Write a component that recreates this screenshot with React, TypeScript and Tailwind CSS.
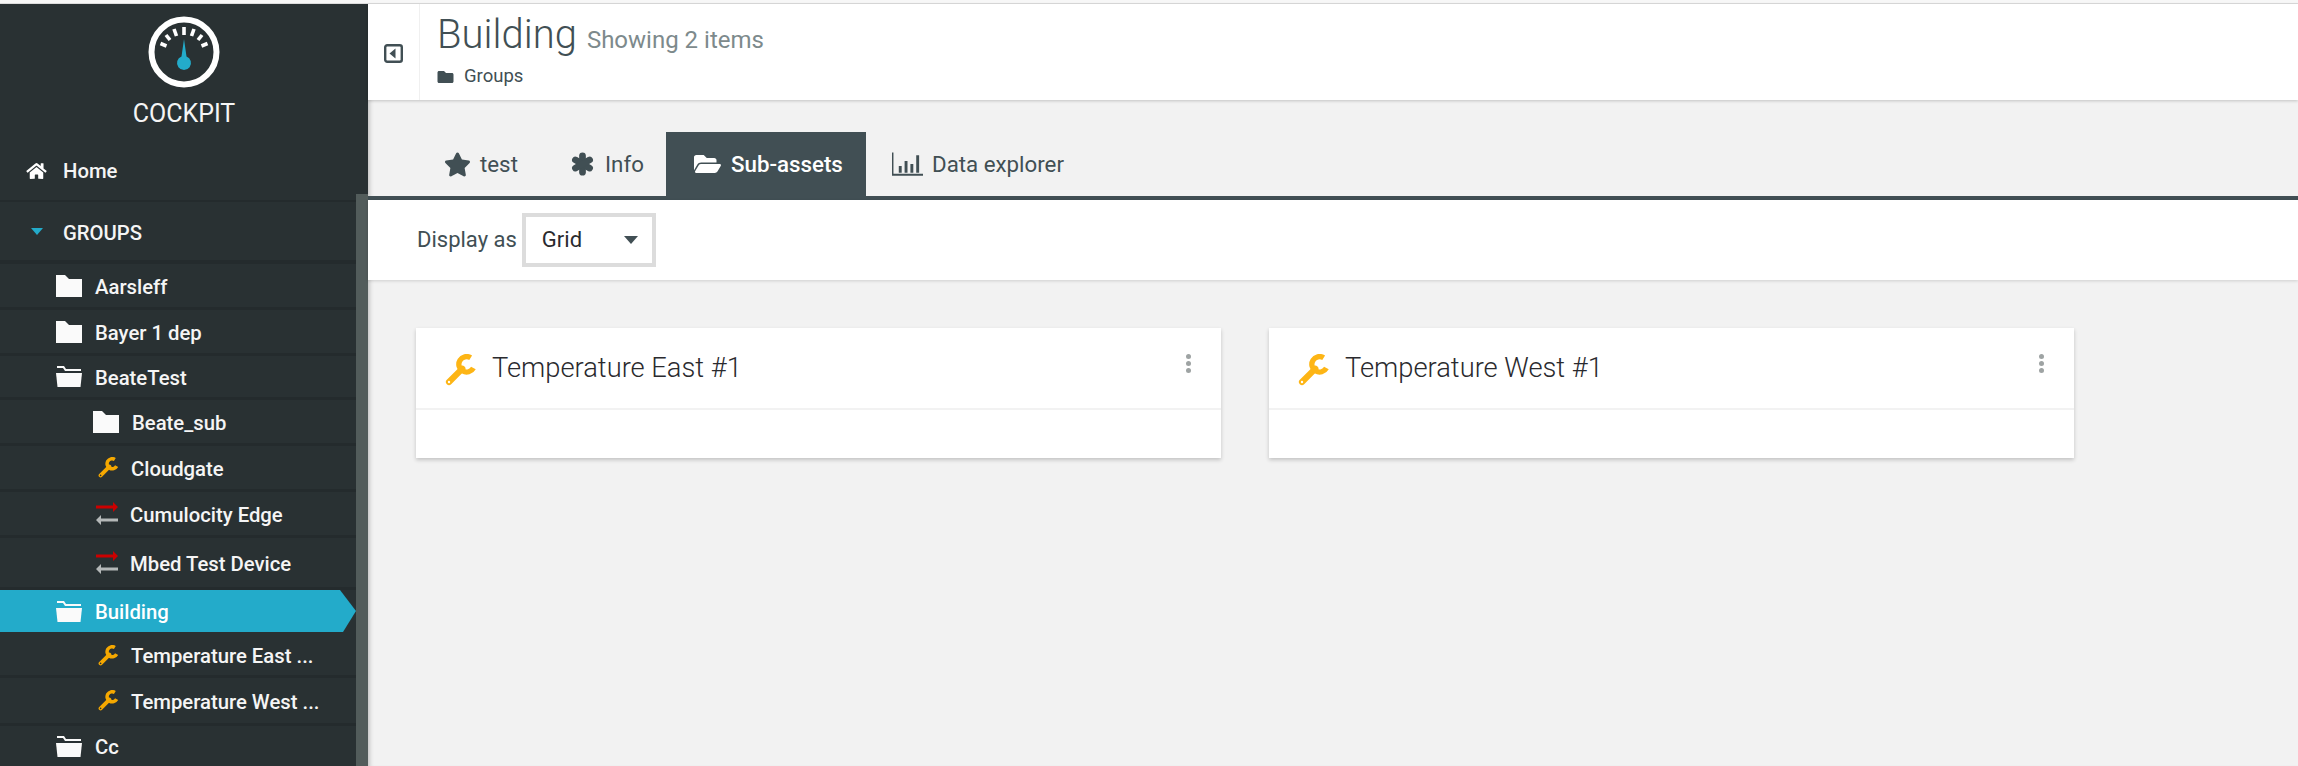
import type { ReactNode } from "react";
import { FaFolder, FaFolderOpen, FaHome, FaStar } from "react-icons/fa";

type RowIcon = "folder" | "open" | "wrench" | "swap";

interface NavRow {
  label: string;
  icon: RowIcon;
  height: string;
  indent: string;
  gap: string;
  active?: boolean;
}

const ROWS: NavRow[] = [
  { label: "Aarsleff", icon: "folder", height: "h-[46px]", indent: "pl-[56px]", gap: "gap-[13px]" },
  { label: "Bayer 1 dep", icon: "folder", height: "h-[46px]", indent: "pl-[56px]", gap: "gap-[13px]" },
  { label: "BeateTest", icon: "open", height: "h-[44px]", indent: "pl-[56px]", gap: "gap-[13px]" },
  { label: "Beate_sub", icon: "folder", height: "h-[46px]", indent: "pl-[93px]", gap: "gap-[13px]" },
  { label: "Cloudgate", icon: "wrench", height: "h-[46px]", indent: "pl-[98px]", gap: "gap-[12px]" },
  { label: "Cumulocity Edge", icon: "swap", height: "h-[46px]", indent: "pl-[96px]", gap: "gap-[12px]" },
  { label: "Mbed Test Device", icon: "swap", height: "h-[52px]", indent: "pl-[96px]", gap: "gap-[12px]" },
  { label: "Building", icon: "open", height: "h-[42px]", indent: "pl-[56px]", gap: "gap-[13px]", active: true },
  { label: "Temperature East ...", icon: "wrench", height: "h-[46px] pt-[3px]", indent: "pl-[98px]", gap: "gap-[12px]" },
  { label: "Temperature West ...", icon: "wrench", height: "h-[48px]", indent: "pl-[98px]", gap: "gap-[12px]" },
  { label: "Cc", icon: "open", height: "h-[40px]", indent: "pl-[56px]", gap: "gap-[13px]" },
];

function WrenchIcon({ className, hole }: { className: string; hole: string }) {
  return (
    <svg viewBox="0 0 24 24" className={`shrink-0 ${className}`} fill="none" stroke="currentColor">
      <path d="M3 21L13 11" strokeWidth="4.600" strokeLinecap="round" />
      <path d="M19.250 2.800A5.800 5.800 0 1 0 21.300 10.500" strokeWidth="4" />
      <circle cx="3" cy="21" r="0.900" fill={hole} stroke="none" />
    </svg>
  );
}

function ClosedFolder() {
  return (
    <svg viewBox="0 0 26 22" className="h-[22px] w-[26px] shrink-0" fill="#fafafa">
      <path d="M0 0h9l4 4h13v18H0z" />
    </svg>
  );
}

function OpenFolder() {
  return (
    <svg viewBox="0 0 26 21" className="h-[21px] w-[26px] shrink-0" fill="#fafafa">
      <path d="M1 0h7l2 3h15v2H9L7 2H1z" />
      <path d="M0 7h26l-1.500 14H1.500z" />
    </svg>
  );
}

function SwapArrows() {
  return (
    <svg viewBox="0 0 22 23" className="h-[23px] w-[22px] shrink-0">
      <path d="M0 3.500h17V0l5 5-5 5V6.500H0z" fill="#cc0000" />
      <path d="M22 16.500H5V13l-5 5 5 5v-3.500h17z" fill="#b4b8b8" />
    </svg>
  );
}

function Icon({ icon }: { icon: RowIcon }) {
  if (icon === "folder") return <ClosedFolder />;
  if (icon === "open") return <OpenFolder />;
  if (icon === "wrench") return <WrenchIcon className="h-[21px] w-[21px] text-[#f5a800]" hole="#293133" />;
  return <SwapArrows />;
}

function Logo() {
  return (
    <svg viewBox="0 0 72 72" className="h-[72px] w-[72px]">
      <circle cx="36" cy="36" r="32.500" fill="none" stroke="#fff" strokeWidth="6" />
      <g stroke="#fff" strokeWidth="3.600">
        <path d="M36 11v8" />
        <path d="M26 13l2.500 7" />
        <path d="M46 13l-2.500 7" />
        <path d="M18 19l4 5" />
        <path d="M54 19l-4 5" />
        <path d="M12.500 27.500l6 2.500" />
        <path d="M59.500 27.500l-6 2.500" />
      </g>
      <path d="M36 23l2.500 17.500a7 7 0 1 1-5 0z" fill="#23abca" />
    </svg>
  );
}

function Sidebar() {
  return (
    <aside className="flex w-[368px] shrink-0 overflow-hidden bg-[#293133] font-['Roboto',sans-serif] text-[20.300px] font-medium text-[#f5f5f5]">
      <div className="w-[356px] shrink-0">
        <div className="flex h-[133px] w-[368px] flex-col items-center pt-[12px]">
          <Logo />
          <span className="mt-[11px] text-[25px] leading-[30px] font-normal">COCKPIT</span>
        </div>
        <div className="flex h-[65px] items-center gap-[15px] border-b-2 border-[#242b2d] pt-[5px] pl-[25px]">
          <FaHome className="h-[18px] w-[23px] text-white" />
          <span>Home</span>
        </div>
        <div className="flex h-[62px] items-center border-b-4 border-[#242b2d] pl-[31px]">
          <span className="h-0 w-0 border-x-[6px] border-t-[7px] border-x-transparent border-t-[#23abca]" />
          <span className="ml-[20px] pt-[5px]">GROUPS</span>
        </div>
        {ROWS.map((row) => (
          <div
            key={row.label}
            className={`flex items-center ${row.height} ${row.indent} ${row.gap} ${
              row.active
                ? "bg-[#23abca] text-white [clip-path:polygon(0_0,340px_0,356px_50%,343px_100%,0_100%)]"
                : row.label === "Cc"
                  ? ""
                  : "border-b-[3px] border-[#242b2d]"
            }`}
          >
            <Icon icon={row.icon} />
            <span className="whitespace-nowrap pt-[3px]">{row.label}</span>
          </div>
        ))}
      </div>
      <div className="flex w-[12px] flex-col pt-[190px]">
        <div className="flex-1 bg-[#525c5b]" />
      </div>
    </aside>
  );
}

function Tab({ icon, label, active, box }: { icon: ReactNode; label: string; active?: boolean; box: string }) {
  return (
    <div
      className={`flex h-full items-center gap-[9px] text-[22.300px] ${box} ${
        active ? "bg-[#414f54] font-medium text-white" : "text-[#414f54]"
      }`}
    >
      {icon}
      <span className="pt-[2px]">{label}</span>
    </div>
  );
}

function AsteriskIcon() {
  return (
    <svg viewBox="0 0 24 24" className="h-[24px] w-[23px]" fill="none" stroke="#414f54" strokeWidth="7" strokeLinecap="round">
      <path d="M12 3.500v17" />
      <path d="M4.600 7.750l14.800 8.500" />
      <path d="M19.400 7.750l-14.800 8.500" />
    </svg>
  );
}

function ChartIcon() {
  return (
    <svg viewBox="0 0 32 24" className="h-[24px] w-[31px]" fill="#414f54">
      <path d="M0 0h1.500v22H32v2H0z" />
      <path d="M7 14h3v7H7zM13 9h3v12h-3zM19 12h3v9h-3zM25 3h3v18h-3z" />
    </svg>
  );
}

function AssetCard({ name }: { name: string }) {
  return (
    <div className="flex h-[130px] w-[805px] flex-col bg-white shadow-[0_2px_4px_rgba(0,0,0,0.2)]">
      <div className="flex h-[82px] items-start justify-between border-b-2 border-[#f2f2f2] pr-[30px] pl-[29px]">
        <div className="flex items-start gap-[15px]">
          <WrenchIcon className="mt-[26px] h-[32px] w-[32px] text-[#fdb515]" hole="#ffffff" />
          <span className="mt-[22px] text-[27.300px] leading-[36px] font-light text-[#2a2a2e]">{name}</span>
        </div>
        <div className="flex flex-col gap-[2px] pt-[26px]">
          <span className="h-[5px] w-[5px] rounded-full bg-[#9ea3a3]" />
          <span className="h-[5px] w-[5px] rounded-full bg-[#9ea3a3]" />
          <span className="h-[5px] w-[5px] rounded-full bg-[#9ea3a3]" />
        </div>
      </div>
    </div>
  );
}

export default function App() {
  return (
    <div className="flex h-[766px] w-[2298px] flex-col overflow-hidden bg-[#f2f2f2] font-['Roboto',sans-serif]">
      <div className="h-[4px] shrink-0 border-b border-[#dcdcdc] bg-[#f7f7f7]" />
      <div className="flex min-h-0 flex-1">
        <Sidebar />
        <main className="min-w-0 flex-1 shadow-[inset_5px_0_5px_-4px_rgba(0,0,0,0.25)]">
          <header className="flex h-[96px] bg-white shadow-[0_1px_3px_rgba(0,0,0,0.2)]">
            <div className="flex w-[52px] items-center justify-center border-r border-[#f0f0f0] pt-[2px]">
              <svg viewBox="0 0 19 19" className="h-[19px] w-[19px]">
                <rect x="1.200" y="1.200" width="16.600" height="16.600" rx="2" fill="none" stroke="#414f54" strokeWidth="2.400" />
                <path d="M11.500 4.500v10l-6-5z" fill="#414f54" />
              </svg>
            </div>
            <div className="pl-[17px]">
              <div className="flex items-baseline gap-[10px] pt-[8px]">
                <h1 className="text-[40px] leading-[46px] font-light text-[#414f54]">Building</h1>
                <span className="text-[24px] text-[#7d8a8c]">Showing 2 items</span>
              </div>
              <div className="mt-[5px] flex items-center gap-[10px] text-[18.500px] text-[#414f54]">
                <FaFolder className="h-[16px] w-[17px]" />
                <span>Groups</span>
              </div>
            </div>
          </header>
          <div className="mt-[32px] flex h-[68px] border-b-4 border-[#414f54] pl-[32px]">
            <Tab box="w-[135px] pl-[44px]" label="test" icon={<FaStar className="h-[25px] w-[27px]" />} />
            <Tab box="w-[131px] pl-[36px] gap-[11px]" label="Info" icon={<AsteriskIcon />} />
            <Tab box="w-[200px] pl-[27px]" active label="Sub-assets" icon={<FaFolderOpen className="h-[24px] w-[29px]" />} />
            <Tab box="w-[230px] pl-[26px]" label="Data explorer" icon={<ChartIcon />} />
          </div>
          <div className="flex h-[80px] items-center gap-[5px] bg-white pl-[49px] shadow-[0_1px_3px_rgba(0,0,0,0.15)]">
            <span className="pb-[2px] text-[22px] text-[#414f54]">Display as</span>
            <div className="flex h-[54px] w-[134px] items-center justify-between border-[4px] border-[#dcdcdc] pr-[14px] pl-[16px]">
              <span className="pb-[2px] text-[22px] text-[#2a2a2e]">Grid</span>
              <span className="h-0 w-0 border-x-[7px] border-t-[8px] border-x-transparent border-t-[#414f54]" />
            </div>
          </div>
          <div className="flex gap-[48px] pt-[48px] pl-[48px]">
            <AssetCard name="Temperature East #1" />
            <AssetCard name="Temperature West #1" />
          </div>
        </main>
      </div>
    </div>
  );
}
